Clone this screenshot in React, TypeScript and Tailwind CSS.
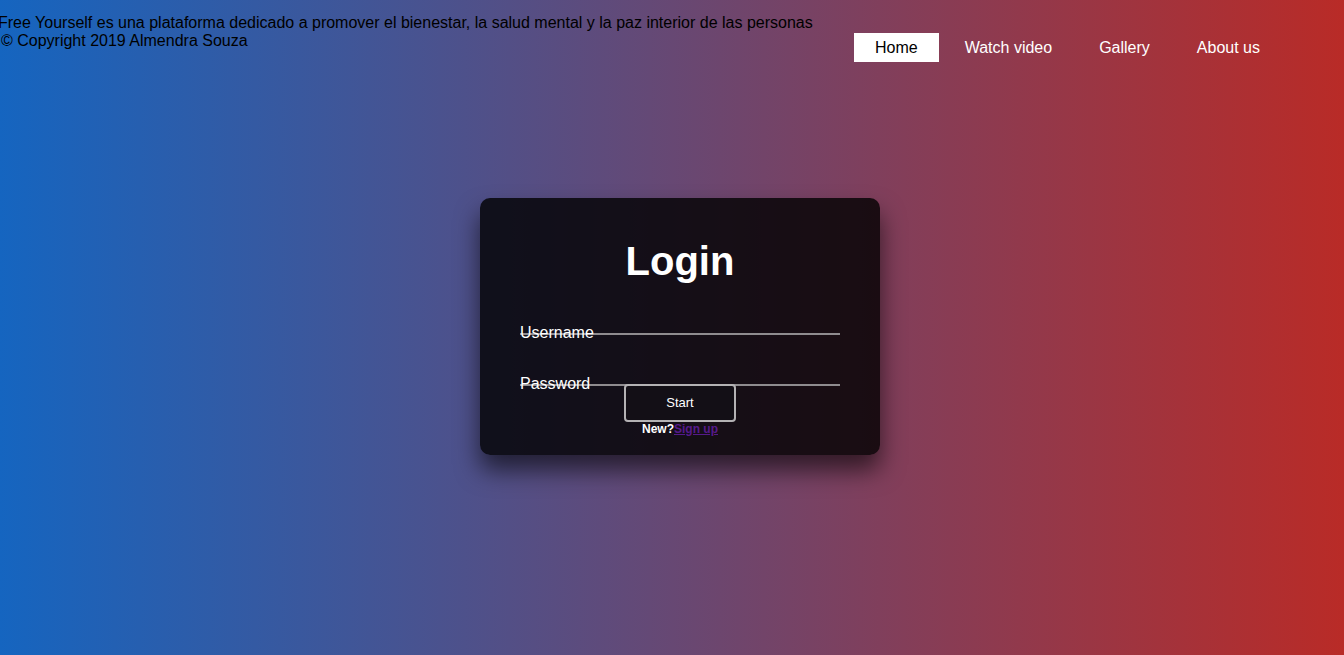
import React from "react";

const navItems = ["Home", "Watch video", "Gallery", "About us"];

const App = () => {
  return (
    <div
      className="min-h-[655px] w-full bg-[linear-gradient(to_right,#1565c0,#b92b27)] font-['Liberation_Sans',Arial,sans-serif]"
    >
      {/* Header */}
      <div className="flex items-start justify-between">
        <div className="pt-[14px] text-[16px] leading-[18px] text-black">
          <p className="-ml-[2px]">
            Free Yourself es una plataforma dedicado a promover el bienestar, la salud mental y la paz interior de las personas
          </p>
          <p className="ml-[1px]">© Copyright 2019 Almendra Souza</p>
        </div>
        <nav className="mr-[63px] mt-[33px] flex gap-[5px]">
          {navItems.map((item, i) => (
            <a
              key={item}
              className={
                i === 0
                  ? "block h-[29px] bg-white px-[21px] text-[16px] leading-[29px] text-black"
                  : "block h-[29px] px-[21px] text-[16px] leading-[29px] text-white"
              }
            >
              {item}
            </a>
          ))}
        </nav>
      </div>

      {/* Login box */}
      <div className="flex justify-center pl-[16px] pt-[136px]">
        <div className="w-[400px] rounded-[10px] bg-black/80 px-[40px] pb-[19px] pt-[40px] shadow-[0_15px_25px_rgba(0,0,0,0.6)]">
          <h2 className="text-center text-[40px] font-bold leading-[46px] text-white">
            Login
          </h2>

          <div className="relative h-[51px] border-b-2 border-[#8f8c8f]">
            <label className="absolute left-0 top-[40px] text-[16px] leading-[18px] text-white">
              Username
            </label>
          </div>

          <div className="relative h-[51px] border-b-2 border-[#8f8c8f]">
            <label className="absolute left-0 top-[40px] text-[16px] leading-[18px] text-white">
              Password
            </label>
          </div>

          <div className="-mt-[2px] flex flex-col items-center">
            <button className="relative h-[38px] w-[112px] rounded-[4px] border-2 border-[#b4b2b4] bg-[#130f16] text-[13px] text-white">
              Start
            </button>
            <p className="text-[12px] font-bold leading-[14px] text-white">
              New?
              <a className="text-[#551a8b] underline">Sign up</a>
            </p>
          </div>
        </div>
      </div>
    </div>
  );
};

export default App;
